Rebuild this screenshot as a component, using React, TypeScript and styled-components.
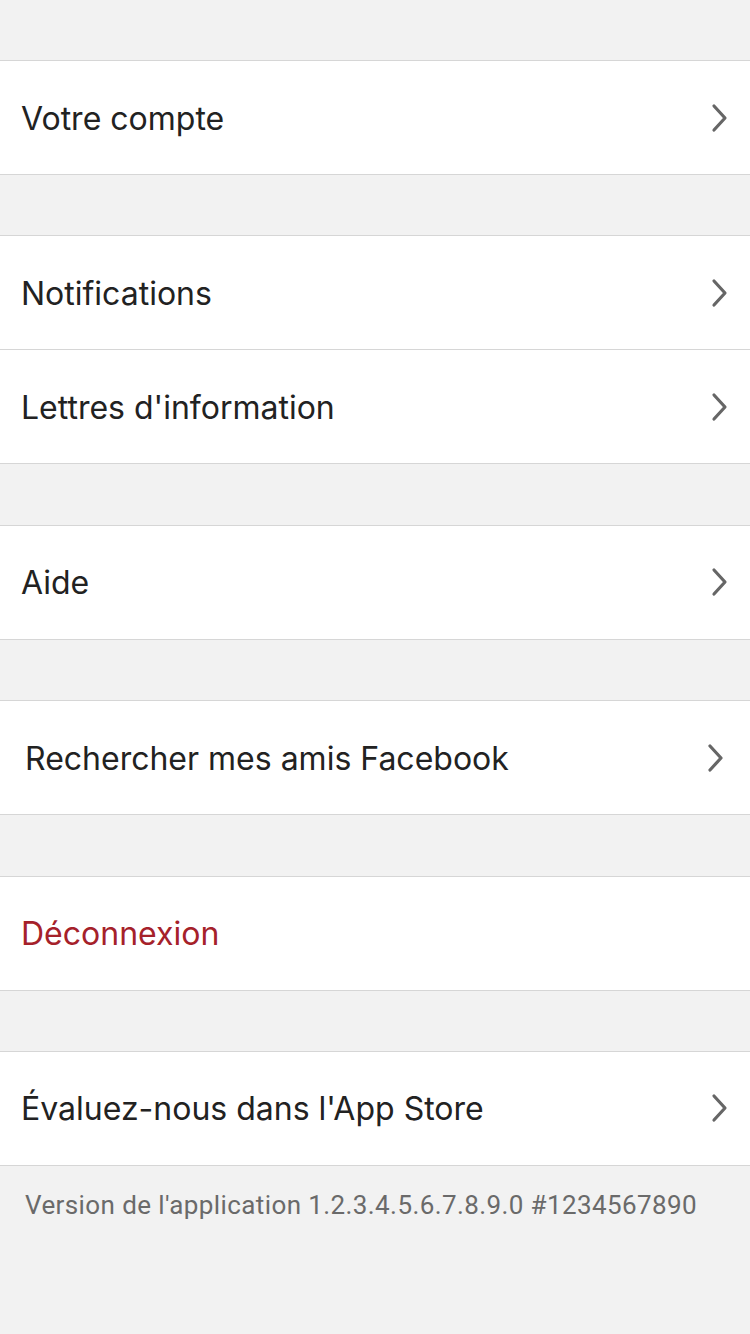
import styled, { createGlobalStyle } from 'styled-components';

const GlobalStyle = createGlobalStyle`
  html, body {
    margin: 0;
    padding: 0;
    background: #f2f2f2;
    font-family: Inter, "Noto Sans", sans-serif;
  }
`;

const Page = styled.div`
  width: 750px;
  min-height: 1334px;
  background: #f2f2f2;
  padding-top: 60px;
  box-sizing: border-box;
`;

const List = styled.div`
  display: flex;
  flex-direction: column;
  gap: 60.4px;
`;

const Section = styled.div`
  background: #fff;
  border-top: 1px solid #d6d6d6;
  border-bottom: 1px solid #d6d6d6;
`;

const Row = styled.div<{ $shift?: number }>`
  height: 113px;
  display: flex;
  align-items: center;
  justify-content: space-between;
  padding-left: ${p => 21 + (p.$shift ?? 0)}px;
  padding-right: ${p => 21 + (p.$shift ?? 0)}px;

  & + & {
    border-top: 1px solid #d6d6d6;
  }
`;

const Label = styled.span<{ $danger?: boolean }>`
  font-size: 32px;
  padding-top: 1px;
  color: ${p => (p.$danger ? '#a5212a' : '#222')};
`;

const Version = styled.div`
  padding: 24px 25px 0;
  font-family: Roboto, "Noto Sans", sans-serif;
  font-size: 26px;
  letter-spacing: 0.4px;
  color: #6a6a6a;
`;

const Chevron = () => (
  <svg width="18" height="30" viewBox="0 0 18 30">
    <path d="M3 3 L14 15 L3 27" fill="none" stroke="#666" strokeWidth="3.2" strokeLinecap="round" strokeLinejoin="round" />
  </svg>
);

type Item = { label: string; danger?: boolean; shift?: number; chevron?: boolean };

const sections: Item[][] = [
  [{ label: 'Votre compte', chevron: true }],
  [
    { label: 'Notifications', chevron: true },
    { label: "Lettres d'information", chevron: true },
  ],
  [{ label: 'Aide', chevron: true }],
  [{ label: 'Rechercher mes amis Facebook', chevron: true, shift: 4 }],
  [{ label: 'Déconnexion', danger: true }],
  [{ label: "Évaluez-nous dans l'App Store", chevron: true }],
];

export default function App() {
  return (
    <>
      <GlobalStyle />
      <Page>
        <List>
          {sections.map((items, i) => (
            <Section key={i}>
              {items.map(item => (
                <Row key={item.label} $shift={item.shift}>
                  <Label $danger={item.danger}>{item.label}</Label>
                  {item.chevron && <Chevron />}
                </Row>
              ))}
            </Section>
          ))}
        </List>
        <Version>Version de l'application 1.2.3.4.5.6.7.8.9.0 #1234567890</Version>
      </Page>
    </>
  );
}
